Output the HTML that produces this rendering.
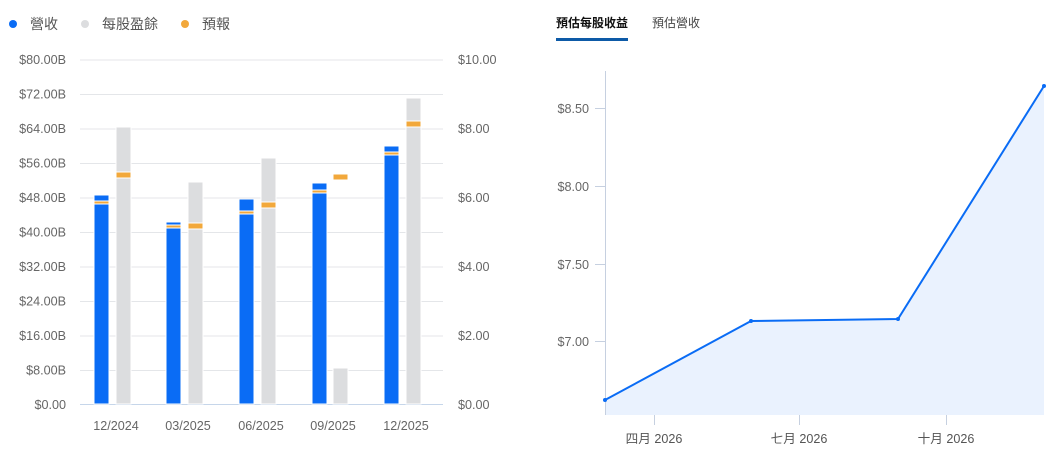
<!DOCTYPE html>
<html><head><meta charset="utf-8"><style>
html,body{margin:0;padding:0;background:#fff;width:1052px;height:450px;overflow:hidden}
svg{display:block;font-family:"Liberation Sans","Noto Sans CJK TC",sans-serif}
</style></head><body>
<svg width="1052" height="450" viewBox="0 0 1052 450">
<circle cx="13" cy="24" r="4" fill="#0a6cf5"/><text x="30" y="29" font-size="14" fill="#555">營收</text>
<circle cx="85" cy="24" r="4" fill="#dcdddf"/><text x="102" y="29" font-size="14" fill="#555">每股盈餘</text>
<circle cx="185" cy="24" r="4" fill="#f2a83b"/><text x="202" y="29" font-size="14" fill="#555">預報</text>
<g stroke="#e4e6e9" stroke-width="1">
<line x1="80" y1="60" x2="443" y2="60"/><line x1="80" y1="94.5" x2="443" y2="94.5"/><line x1="80" y1="129" x2="443" y2="129"/><line x1="80" y1="163.5" x2="443" y2="163.5"/><line x1="80" y1="198" x2="443" y2="198"/><line x1="80" y1="232.5" x2="443" y2="232.5"/><line x1="80" y1="267" x2="443" y2="267"/><line x1="80" y1="301.5" x2="443" y2="301.5"/><line x1="80" y1="336" x2="443" y2="336"/><line x1="80" y1="370.5" x2="443" y2="370.5"/>
</g>
<line x1="80" y1="404.5" x2="443" y2="404.5" stroke="#c6d6ea"/>
<g font-size="12.6" fill="#666" text-anchor="end">
<text x="66" y="64">$80.00B</text><text x="66" y="98.5">$72.00B</text><text x="66" y="133">$64.00B</text><text x="66" y="167.5">$56.00B</text><text x="66" y="202">$48.00B</text><text x="66" y="236.5">$40.00B</text><text x="66" y="271">$32.00B</text><text x="66" y="305.5">$24.00B</text><text x="66" y="340">$16.00B</text><text x="66" y="374.5">$8.00B</text><text x="66" y="409">$0.00</text>
</g>
<g font-size="12.6" fill="#666">
<text x="458" y="64">$10.00</text><text x="458" y="133">$8.00</text><text x="458" y="202">$6.00</text><text x="458" y="271">$4.00</text><text x="458" y="340">$2.00</text><text x="458" y="409">$0.00</text>
</g>
<g font-size="12.6" fill="#666" text-anchor="middle">
<text x="116" y="430">12/2024</text><text x="188" y="430">03/2025</text><text x="261" y="430">06/2025</text><text x="333" y="430">09/2025</text><text x="406" y="430">12/2025</text>
</g>
<g stroke="#fff" stroke-width="1">
<rect x="94" y="195" width="15" height="209" fill="#0a6cf5"/>
<rect x="94" y="201" width="15" height="3" fill="#f2a83b"/>
<rect x="116" y="127" width="15" height="277" fill="#dcdddf"/>
<rect x="116" y="172" width="15" height="6" fill="#f2a83b"/>
<rect x="166" y="222" width="15" height="182" fill="#0a6cf5"/>
<rect x="166" y="225" width="15" height="3" fill="#f2a83b"/>
<rect x="188" y="182" width="15" height="222" fill="#dcdddf"/>
<rect x="188" y="223" width="15" height="6" fill="#f2a83b"/>
<rect x="239" y="199" width="15" height="205" fill="#0a6cf5"/>
<rect x="239" y="211" width="15" height="3" fill="#f2a83b"/>
<rect x="261" y="158" width="15" height="246" fill="#dcdddf"/>
<rect x="261" y="202" width="15" height="6" fill="#f2a83b"/>
<rect x="312" y="183" width="15" height="221" fill="#0a6cf5"/>
<rect x="312" y="190" width="15" height="3" fill="#f2a83b"/>
<rect x="333" y="368" width="15" height="36" fill="#dcdddf"/>
<rect x="333" y="174" width="15" height="6" fill="#f2a83b"/>
<rect x="384" y="146" width="15" height="258" fill="#0a6cf5"/>
<rect x="384" y="152" width="15" height="3" fill="#f2a83b"/>
<rect x="406" y="98" width="15" height="306" fill="#dcdddf"/>
<rect x="406" y="121" width="15" height="6" fill="#f2a83b"/>
</g>
<text x="556" y="27" font-size="12" font-weight="bold" fill="#111">預估每股收益</text>
<text x="652" y="27" font-size="12" fill="#444">預估營收</text>
<rect x="556" y="38" width="72" height="3" fill="#0d5aa7"/>
<path d="M605,400 L751,321 L898,319 L1044,86 L1044,415 L605,415Z" fill="#eaf2fe"/>
<line x1="605.5" y1="71" x2="605.5" y2="415" stroke="#c6d0e0"/>
<g stroke="#c6d0e0"><line x1="595" y1="108.5" x2="605" y2="108.5"/><line x1="595" y1="186.5" x2="605" y2="186.5"/><line x1="595" y1="264.5" x2="605" y2="264.5"/><line x1="595" y1="341.5" x2="605" y2="341.5"/>
<line x1="654.5" y1="415" x2="654.5" y2="425"/><line x1="799.5" y1="415" x2="799.5" y2="425"/><line x1="946.5" y1="415" x2="946.5" y2="425"/></g>
<g font-size="12.6" fill="#666" text-anchor="end">
<text x="589" y="113">$8.50</text><text x="589" y="191">$8.00</text><text x="589" y="269">$7.50</text><text x="589" y="346">$7.00</text>
</g>
<g font-size="12.6" fill="#555" text-anchor="middle">
<text x="654" y="443">四月 2026</text><text x="799" y="443">七月 2026</text><text x="946" y="443">十月 2026</text>
</g>
<polyline points="605,400 751,321 898,319 1044,86" fill="none" stroke="#0a6cf5" stroke-width="2"/>
<g fill="#0a6cf5"><circle cx="605" cy="400" r="2"/><circle cx="751" cy="321" r="2"/><circle cx="898" cy="319" r="2"/><circle cx="1044" cy="86" r="2"/></g>
</svg>
</body></html>
